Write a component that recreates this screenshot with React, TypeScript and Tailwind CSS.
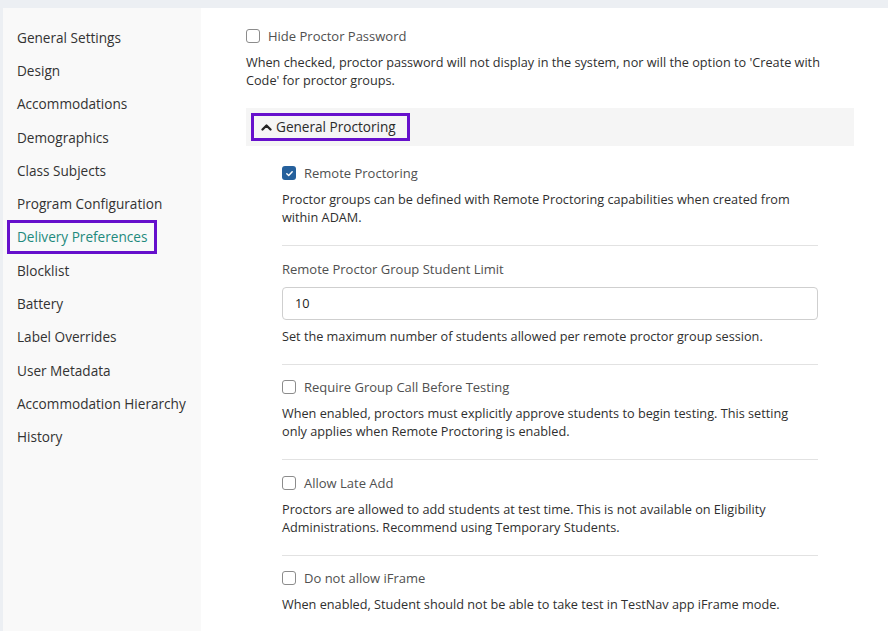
import React from "react";

const navItems = [
  "General Settings",
  "Design",
  "Accommodations",
  "Demographics",
  "Class Subjects",
  "Program Configuration",
  "Delivery Preferences",
  "Blocklist",
  "Battery",
  "Label Overrides",
  "User Metadata",
  "Accommodation Hierarchy",
  "History",
];

function Checkbox({ checked = false }: { checked?: boolean }) {
  if (checked) {
    return (
      <span className="flex h-[14px] w-[14px] shrink-0 items-center justify-center rounded-[3px] bg-[#25609c]">
        <svg width="9" height="9" viewBox="0 0 10 10" fill="none">
          <path d="M2 5.2L4.1 7.2L8 3" stroke="white" strokeWidth="1.6" strokeLinecap="round" strokeLinejoin="round" />
        </svg>
      </span>
    );
  }
  return <span className="h-[14px] w-[14px] shrink-0 rounded-[3px] border border-[#8c8c8c] bg-white" />;
}

function CheckRow({ label, checked, desc }: { label: string; checked?: boolean; desc: React.ReactNode }) {
  return (
    <div>
      <div className="flex h-[18px] items-center gap-[8px]">
        <Checkbox checked={checked} />
        <span className="text-[13px] text-[#505050]">{label}</span>
      </div>
      <p className="mt-[8px] text-[#2f2f2f]">{desc}</p>
    </div>
  );
}

function Divider() {
  return <div className="mt-[19px] mb-[13.5px] h-px bg-[#e2e2e2]" />;
}

export default function App() {
  return (
    <div className="flex min-h-[631px] w-[888px] bg-[#eceff3] pl-[3px] pt-[8px] font-['Open_Sans',sans-serif] text-[12.7px] leading-[18px]">
      <aside className="w-[198px] shrink-0 bg-[#f9f9f9] pt-[13px]">
        <ul className="flex flex-col">
          {navItems.map((item) => {
            const active = item === "Delivery Preferences";
            return (
              <li key={item} className="flex h-[33.3px] items-center text-[13.6px]">
                {active ? (
                  <span className="ml-[4px] flex h-[34px] items-center border-[3px] border-[#6610cc] px-[7px] text-[#1f8a7d]">
                    {item}
                  </span>
                ) : (
                  <span className="ml-[14px] text-[#333333]">{item}</span>
                )}
              </li>
            );
          })}
        </ul>
      </aside>
      <main className="flex-1 bg-white pl-[45px] pr-[34px] pt-[19px]">
        <CheckRow
          label="Hide Proctor Password"
          desc={
            <>
              When checked, proctor password will not display in the system, nor will the option to 'Create with
              <br />
              Code' for proctor groups.
            </>
          }
        />
        <div className="mt-[19px] flex h-[38px] items-center bg-[#f5f5f5] pl-[5px]">
          <div className="flex h-[28px] items-center gap-[4px] border-[3px] border-[#6610cc] pl-[7px] pr-[11px] text-[13.6px] text-[#2b2b2b]">
            <svg width="11" height="8" viewBox="0 0 11 8" fill="none">
              <path d="M1.5 6.5L5.5 2.5L9.5 6.5" stroke="#222" strokeWidth="2.3" strokeLinecap="round" strokeLinejoin="round" />
            </svg>
            <span>General Proctoring</span>
          </div>
        </div>
        <div className="mx-[36px] mt-[18px] pb-[20px]">
          <CheckRow
            label="Remote Proctoring"
            checked
            desc={
              <>
                Proctor groups can be defined with Remote Proctoring capabilities when created from
                <br />
                within ADAM.
              </>
            }
          />
          <Divider />
          <div>
            <div className="flex h-[18px] items-center text-[13px] text-[#505050]">Remote Proctor Group Student Limit</div>
            <div className="mt-[9px] flex h-[33px] items-center rounded-[4px] border border-[#cfcfcf] px-[12px] text-[#222]">
              10
            </div>
            <p className="mt-[7px] text-[#2f2f2f]">
              Set the maximum number of students allowed per remote proctor group session.
            </p>
          </div>
          <Divider />
          <CheckRow
            label="Require Group Call Before Testing"
            desc={
              <>
                When enabled, proctors must explicitly approve students to begin testing. This setting
                <br />
                only applies when Remote Proctoring is enabled.
              </>
            }
          />
          <Divider />
          <CheckRow
            label="Allow Late Add"
            desc={
              <>
                Proctors are allowed to add students at test time. This is not available on Eligibility
                <br />
                Administrations. Recommend using Temporary Students.
              </>
            }
          />
          <Divider />
          <CheckRow
            label="Do not allow iFrame"
            desc={<>When enabled, Student should not be able to take test in TestNav app iFrame mode.</>}
          />
        </div>
      </main>
    </div>
  );
}
